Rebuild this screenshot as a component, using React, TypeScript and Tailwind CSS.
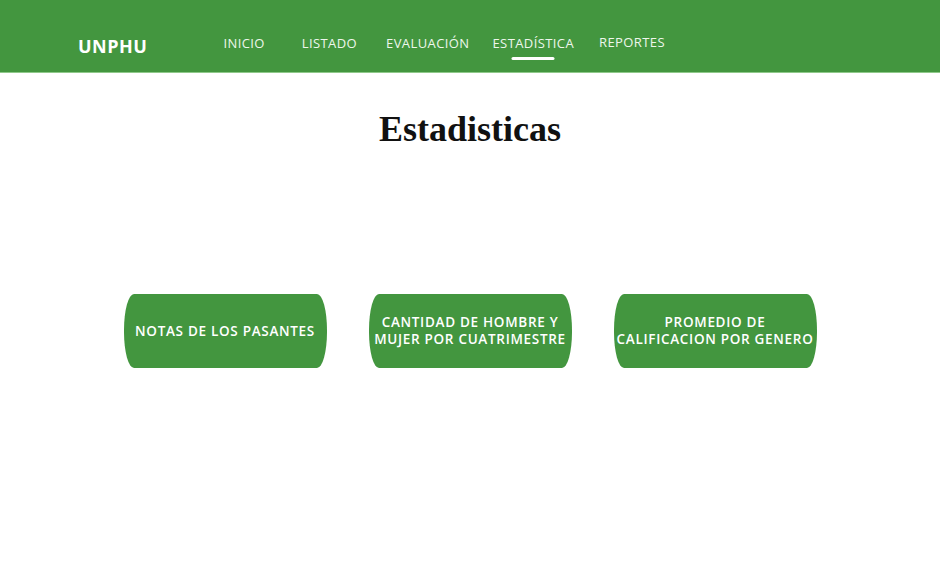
const navItems = [
  { label: "INICIO", cls: "ml-[76px]" },
  { label: "LISTADO", cls: "ml-[37px]" },
  { label: "EVALUACIÓN", cls: "ml-[29px]" },
  { label: "ESTADÍSTICA", cls: "ml-[23px]", active: true },
  { label: "REPORTES", cls: "ml-[25px] -mt-[2px]" },
];

const cards = [
  ["NOTAS DE LOS PASANTES"],
  ["CANTIDAD DE HOMBRE Y", "MUJER POR CUATRIMESTRE"],
  ["PROMEDIO DE", "CALIFICACION POR GENERO"],
];

export default function App() {
  return (
    <div className="min-h-[588px] w-full bg-white font-['Open_Sans',sans-serif]">
      <header className="flex h-[73px] items-center border-b border-[#8fc98a] bg-[#43963f] pl-[78px] pt-[15px]">
        <div className="mt-[6px] text-[18px] font-bold tracking-[0.5px] text-white">
          UNPHU
        </div>
        {navItems.map((item) => (
          <div key={item.label} className={`relative ${item.cls} text-[13px] tracking-[0.4px] text-[#eef6ec]`}>
            {item.label}
            {item.active && (
              <span className="absolute left-1/2 top-[23px] h-[3px] w-[43px] -translate-x-1/2 rounded-full bg-white" />
            )}
          </div>
        ))}
      </header>

      <h1 className="mt-[29px] text-center font-['Liberation_Serif',serif] text-[36px] font-bold text-[#111]">
        Estadisticas
      </h1>

      <div className="mt-[138px] flex justify-center gap-[42px]">
        {cards.map((lines) => (
          <button
            key={lines.join(" ")}
            className="flex h-[74px] w-[203px] flex-col items-center justify-center rounded-[10px/36px] bg-[#43963f] text-[13.5px] font-semibold leading-[17px] tracking-[0.7px] text-white"
          >
            {lines.map((l) => (
              <span key={l}>{l}</span>
            ))}
          </button>
        ))}
      </div>
    </div>
  );
}
